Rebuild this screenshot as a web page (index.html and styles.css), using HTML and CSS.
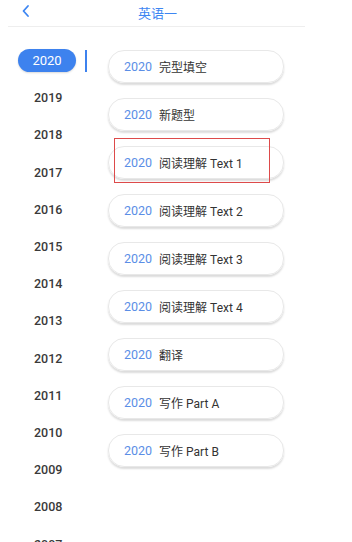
FILE: index.html
```html
<!DOCTYPE html>
<html>
<head>
<meta charset="utf-8">
<link rel="stylesheet" href="styles.css">
</head>
<body>
<div class="page">
  <header class="header">
    <span class="back"><svg width="10" height="14" viewBox="0 0 10 14"><path d="M7 2 L2.5 7 L7 12" fill="none" stroke="#3d86f2" stroke-width="1.8" stroke-linecap="round" stroke-linejoin="round"/></svg></span>
    <span class="title">英语一</span>
  </header>
  <div class="content">
    <ul class="years">
      <li class="year active"><span class="pill">2020</span><span class="bar"></span></li>
      <li class="year">2019</li>
      <li class="year">2018</li>
      <li class="year">2017</li>
      <li class="year">2016</li>
      <li class="year">2015</li>
      <li class="year">2014</li>
      <li class="year">2013</li>
      <li class="year">2012</li>
      <li class="year">2011</li>
      <li class="year">2010</li>
      <li class="year">2009</li>
      <li class="year">2008</li>
      <li class="year">2007</li>
    </ul>
    <ul class="cards">
      <li class="card"><span class="cy">2020</span><span class="ct">完型填空</span></li>
      <li class="card"><span class="cy">2020</span><span class="ct">新题型</span></li>
      <li class="card"><span class="cy">2020</span><span class="ct">阅读理解 Text 1</span><span class="mark"></span></li>
      <li class="card"><span class="cy">2020</span><span class="ct">阅读理解 Text 2</span></li>
      <li class="card"><span class="cy">2020</span><span class="ct">阅读理解 Text 3</span></li>
      <li class="card"><span class="cy">2020</span><span class="ct">阅读理解 Text 4</span></li>
      <li class="card"><span class="cy">2020</span><span class="ct">翻译</span></li>
      <li class="card"><span class="cy">2020</span><span class="ct">写作 Part A</span></li>
      <li class="card"><span class="cy">2020</span><span class="ct">写作 Part B</span></li>
    </ul>
  </div>
</div>
</body>
</html>
```
FILE: styles.css
```css
html, body {
  margin: 0;
  padding: 0;
  background: #fff;
  height: 542px;
  overflow: hidden;
}
body {
  font-family: Roboto, "Noto Sans CJK SC", sans-serif;
  color: #333;
}
.page {
  width: 352px;
}
.header {
  position: relative;
  height: 26px;
  margin: 0 47px 0 8px;
  border-bottom: 1px solid #eeeeee;
  display: flex;
  align-items: center;
  justify-content: center;
}
.back {
  position: absolute;
  left: 13px;
  top: 4px;
  display: flex;
}
.title {
  color: #3d86f2;
  font-size: 13px;
  margin-left: 2px;
  margin-top: -2px;
}
.content {
  display: flex;
}
.years {
  list-style: none;
  margin: 0;
  padding: 15px 0 0 0;
  width: 108px;
  flex: none;
}
.year {
  position: relative;
  height: 37.2px;
  display: flex;
  align-items: center;
  padding-left: 34px;
  font-size: 12.5px;
  font-weight: 500;
  color: #3a3a3a;
}
.year.active {
  padding-left: 18px;
}
.pill {
  width: 58px;
  height: 23px;
  border-radius: 12px;
  background: #3d82ee;
  color: #fff;
  display: flex;
  align-items: center;
  justify-content: center;
  font-size: 13px;
  font-weight: 400;
  box-shadow: 0 1px 2px rgba(0,0,0,0.15);
}
.bar {
  width: 2px;
  height: 22px;
  background: #3d82ee;
  margin-left: 9px;
}
.cards {
  list-style: none;
  margin: 0;
  padding: 23px 0 0 0;
  display: flex;
  flex-direction: column;
  gap: 15px;
}
.card {
  position: relative;
  width: 159px;
  height: 31px;
  border: 1px solid #e8e8e8;
  border-radius: 16px;
  box-shadow: 0 2px 2px rgba(0,0,0,0.14);
  display: flex;
  align-items: center;
  padding-left: 15px;
  box-sizing: content-box;
  font-size: 12px;
}
.cy {
  color: #5b8ee6;
  font-size: 12.5px;
  margin-right: 7px;
}
.ct {
  color: #333;
}
.mark {
  position: absolute;
  left: 5px;
  top: -9px;
  width: 154px;
  height: 43px;
  border: 1px solid #dd4a4a;
}
```
